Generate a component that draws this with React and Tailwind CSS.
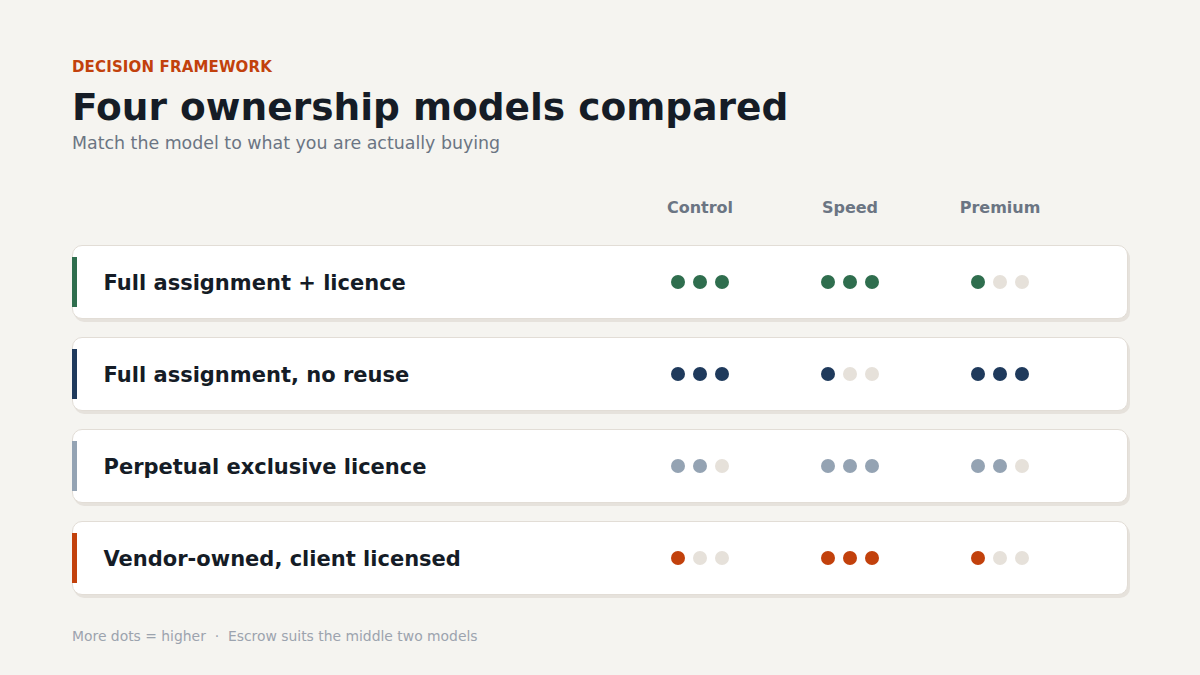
import React from "react";

const rows = [
  { name: "Full assignment + licence", color: "bg-[#2f6e4e]", vals: [3, 3, 1] },
  { name: "Full assignment, no reuse", color: "bg-[#1f3a5c]", vals: [3, 1, 3] },
  { name: "Perpetual exclusive licence", color: "bg-[#94a3b3]", vals: [2, 3, 2] },
  { name: "Vendor-owned, client licensed", color: "bg-[#c2410c]", vals: [1, 3, 1] },
];

function Dots({ n, color }) {
  return (
    <div className="flex items-center justify-center gap-[8px]">
      {[0, 1, 2].map((i) => (
        <span
          key={i}
          className={`block w-[14px] h-[14px] rounded-full ${i < n ? color : "bg-[#e6e1da]"}`}
        />
      ))}
    </div>
  );
}

export default function App() {
  return (
    <div
      className="w-[1200px] h-[675px] bg-[#f5f4f0] px-[72px] pt-[58px]"
      style={{ fontFamily: '"DejaVu Sans", "Liberation Sans", sans-serif' }}
    >
      <div className="text-[15px] leading-[18px] font-bold text-[#c2410c] tracking-[0.15px]">
        DECISION FRAMEWORK
      </div>
      <h1 className="mt-[9px] text-[37.5px] leading-[44px] font-bold text-[#151c26]">
        Four ownership models compared
      </h1>
      <div className="mt-[4px] text-[17.4px] leading-[20px] text-[#6b7583]">
        Match the model to what you are actually buying
      </div>

      <div className="mt-[46px] flex pr-[53px]">
        <div className="flex-1" />
        {["Control", "Speed", "Premium"].map((h) => (
          <div
            key={h}
            className="w-[150px] text-center text-[16px] leading-[18px] font-bold text-[#6b7583]"
          >
            {h}
          </div>
        ))}
      </div>

      <div className="mt-[28px] flex flex-col gap-[18px]">
        {rows.map((r) => (
          <div
            key={r.name}
            className="relative h-[74px] bg-white rounded-[10px] border-[1.5px] border-[#e2ddd6] shadow-[2px_3px_0_#e6e2dc] flex items-center pr-[52px]"
          >
            <span className={`absolute left-[-1.5px] top-[10.5px] w-[5px] h-[50px] ${r.color}`} />
            <div className="flex-1 pl-[30.5px] pt-[1px] text-[21px] leading-[24px] font-bold text-[#151c26]">
              {r.name}
            </div>
            {r.vals.map((v, i) => (
              <div key={i} className="w-[150px]">
                <Dots n={v} color={r.color} />
              </div>
            ))}
          </div>
        ))}
      </div>

      <div className="mt-[33px] text-[13.9px] leading-[17px] text-[#9ca3ae]">
        More dots = higher &nbsp;·&nbsp; Escrow suits the middle two models
      </div>
    </div>
  );
}
